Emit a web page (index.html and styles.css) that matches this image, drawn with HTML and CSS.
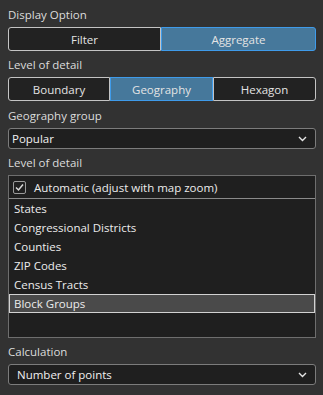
FILE: index.html
```html
<!DOCTYPE html>
<html lang="en">
<head>
    <meta charset="UTF-8">
    <meta name="viewport" content="width=device-width, initial-scale=1.0">
    <title>Display options</title>
    <link rel="stylesheet" href="styles.css">
</head>
<body>
    <div class="panel">
        <div class="field">
            <div class="label">Display Option</div>
            <div class="segments two">
                <button class="seg">Filter</button>
                <button class="seg active">Aggregate</button>
            </div>
        </div>

        <div class="field">
            <div class="label">Level of detail</div>
            <div class="segments three">
                <button class="seg">Boundary</button>
                <button class="seg active">Geography</button>
                <button class="seg">Hexagon</button>
            </div>
        </div>

        <div class="field spaced">
            <div class="label">Geography group</div>
            <div class="select">
                <span class="select-text">Popular</span>
                <svg class="chevron" width="9" height="6" viewBox="0 0 9 6">
                    <path d="M1 1 L4.5 4.5 L8 1" fill="none" stroke="#e6e6e6" stroke-width="1.4"/>
                </svg>
            </div>
        </div>

        <div class="field">
            <div class="label">Level of detail</div>
            <div class="listbox">
                <div class="check-row">
                    <span class="checkbox">
                        <svg width="11" height="11" viewBox="0 0 11 11">
                            <path d="M2 5.5 L4.5 8 L9 2.5" fill="none" stroke="#d8d8d8" stroke-width="1.5"/>
                        </svg>
                    </span>
                    <span>Automatic (adjust with map zoom)</span>
                </div>
                <div class="items">
                    <div class="item">States</div>
                    <div class="item">Congressional Districts</div>
                    <div class="item">Counties</div>
                    <div class="item">ZIP Codes</div>
                    <div class="item">Census Tracts</div>
                    <div class="item selected">Block Groups</div>
                </div>
            </div>
        </div>

        <div class="field">
            <div class="label">Calculation</div>
            <div class="select">
                <span class="select-text indent">Number of points</span>
                <svg class="chevron" width="9" height="6" viewBox="0 0 9 6">
                    <path d="M1 1 L4.5 4.5 L8 1" fill="none" stroke="#e6e6e6" stroke-width="1.4"/>
                </svg>
            </div>
        </div>
    </div>
</body>
</html>
```

FILE: styles.css
```css
body {
    margin: 0;
    background-color: #323232;
    color: #e4e4e4;
    font-family: "Open Sans", "Liberation Sans", sans-serif;
    font-size: 11.5px;
}
.panel {
    width: 308px;
    margin-left: 8px;
    padding-top: 4px;
    display: flex;
    flex-direction: column;
    gap: 3px;
}
.field.spaced {
    margin-top: 1px;
}
.label {
    height: 19px;
    padding-top: 1px;
    line-height: 20px;
    margin-bottom: 3px;
    color: #dcdcdc;
}
.segments {
    display: grid;
    height: 24px;
}
.segments.two {
    grid-template-columns: 153px 155px;
}
.segments.three {
    grid-template-columns: 102px 103px 103px;
}
.seg {
    font-family: inherit;
    font-size: 11.5px;
    color: #e4e4e4;
    background-color: #222222;
    border: 1px solid #c4c4c4;
    margin: 0;
    padding: 0;
    cursor: pointer;
}
.seg:first-child {
    border-radius: 3px 0 0 3px;
}
.seg:last-child {
    border-radius: 0 3px 3px 0;
}
.seg.active {
    background-color: #46789b;
    border-color: #3f9bea;
}
.select {
    height: 21px;
    box-sizing: border-box;
    border: 1px solid #7c7c7c;
    border-radius: 3px;
    background-color: #1f1f1f;
    display: flex;
    align-items: center;
    justify-content: space-between;
    padding: 0 8px 0 3px;
}
.select-text {
    color: #f0f0f0;
}
.select-text.indent {
    padding-left: 5px;
}
.listbox {
    height: 163px;
    box-sizing: border-box;
    border: 1px solid #6e6e6e;
    background-color: #1f1f1f;
}
.check-row {
    height: 23px;
    box-sizing: border-box;
    border-bottom: 1px solid #8a8a8a;
    display: flex;
    align-items: center;
    gap: 8px;
    padding-left: 4px;
    color: #ececec;
}
.checkbox {
    width: 11px;
    height: 11px;
    border: 1px solid #9a9a9a;
    border-radius: 2px;
    display: flex;
}
.item {
    height: 19px;
    line-height: 19px;
    padding-left: 5px;
    color: #ececec;
    box-sizing: border-box;
}
.item.selected {
    background-color: #4a4a4a;
    border: 1px solid #d2d2d2;
    padding-left: 4px;
    line-height: 17px;
}
```
